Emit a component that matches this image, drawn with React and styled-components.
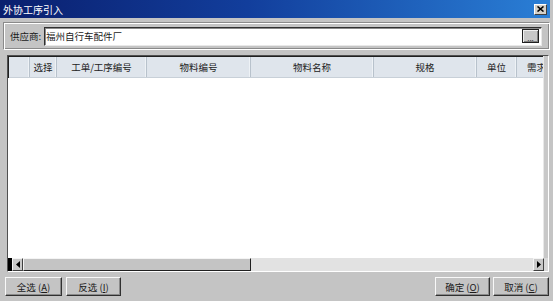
import styled, { createGlobalStyle } from "styled-components";

const GlobalStyle = createGlobalStyle`
  html, body {
    margin: 0;
    padding: 0;
    background: #c4c4c4;
  }
  body {
    font-family: "Noto Sans CJK SC", "Liberation Sans", sans-serif;
    font-size: 9.5px;
    color: #1a1a1a;
  }
`;

const Window = styled.div`
  width: 553px;
  height: 301px;
  box-sizing: border-box;
  background: #c4c4c4;
  display: flex;
  flex-direction: column;
  overflow: hidden;
`;

const TitleBar = styled.div`
  height: 18px;
  margin-right: 3px;
  display: flex;
  align-items: center;
  justify-content: space-between;
  padding: 0 3px 0 3px;
  background: linear-gradient(to right, #0a1f6e 0%, #123e9c 45%, #2a7fd6 100%);
  color: #fff;
  font-size: 10px;
  box-sizing: border-box;
`;

const CloseButton = styled.div`
  width: 13px;
  height: 11px;
  box-sizing: border-box;
  background: #d4d0c8;
  border: 1px solid;
  border-color: #fff #404040 #404040 #fff;
  display: flex;
  align-items: center;
  justify-content: center;
`;

const SupplierPanel = styled.div`
  margin: 4px 3px 0 3px;
  height: 28px;
  box-sizing: border-box;
  border: 1px solid;
  border-color: #8a8a8a #fff #fff #8a8a8a;
  box-shadow: inset 1px 1px 0 #fff, inset -1px -1px 0 #8a8a8a;
  display: flex;
  align-items: center;
  padding: 0 7px 0 6px;
  gap: 0;
`;

const Label = styled.span`
  width: 34px;
  flex: none;
  white-space: nowrap;
`;

const InputBox = styled.div`
  flex: 1;
  height: 19px;
  box-sizing: border-box;
  background: #fff;
  border: 1px solid;
  border-color: #303030 #e8e8e8 #e8e8e8 #303030;
  box-shadow: inset 1px 1px 0 #8a8a8a;
  display: flex;
  align-items: center;
  justify-content: space-between;
  padding: 0 2px 0 1px;
`;

const BrowseButton = styled.div`
  width: 17px;
  height: 14px;
  box-sizing: border-box;
  background: #c8c8c8;
  border: 1px solid #202020;
  box-shadow: inset 1px 1px 0 #f0f0f0, inset -1px -1px 0 #808080;
  display: flex;
  align-items: flex-end;
  justify-content: center;
  font-size: 8px;
  line-height: 9px;
  color: #333;
`;

const Grid = styled.div`
  margin: 5px 4px 0 7px;
  height: 217px;
  box-sizing: border-box;
  border: 1px solid;
  border-color: #505050 #fff #fff #505050;
  box-shadow: inset 1px 1px 0 #202020;
  display: flex;
  flex-direction: column;
  background: #fff;
  overflow: hidden;
`;

const GridMain = styled.div`
  flex: 1;
  display: flex;
  min-height: 0;
`;

const TableArea = styled.div`
  flex: 1;
  display: flex;
  flex-direction: column;
  overflow: hidden;
`;

const HeaderRow = styled.div`
  height: 20px;
  flex: none;
  display: flex;
  background: #dfe5ec;
  border-bottom: 1px solid #c8d0d8;
  margin-top: 1px;
  margin-left: 1px;
`;

const HeaderCell = styled.div`
  width: ${(p) => p.$w}px;
  flex: none;
  box-sizing: border-box;
  border-right: 1px solid #b8c2cc;
  box-shadow: inset -1px 0 0 #eef2f6;
  display: flex;
  align-items: center;
  justify-content: center;
  white-space: nowrap;
  overflow: hidden;
  color: #222;
`;

const Body = styled.div`
  flex: 1;
  background: #fff;
`;

const VScroll = styled.div`
  width: 4px;
  flex: none;
  background: #c8c8c8;
  border-left: 1px solid #e8e8e8;
`;

const HScroll = styled.div`
  height: 13px;
  flex: none;
  display: flex;
  background: #e2e2e2;
`;

const ScrollEdge = styled.div`
  width: 4px;
  background: #000;
`;

const ArrowButton = styled.div`
  width: 11px;
  flex: none;
  box-sizing: border-box;
  background: #c8c8c8;
  border: 1px solid;
  border-color: #f4f4f4 #404040 #404040 #f4f4f4;
  display: flex;
  align-items: center;
  justify-content: center;
`;

const Thumb = styled.div`
  width: 228px;
  flex: none;
  box-sizing: border-box;
  background: #c4c4c4;
  border: 1px solid;
  border-color: #f4f4f4 #202020 #202020 #f4f4f4;
`;

const Track = styled.div`
  flex: 1;
  background: #e2e2e2;
`;

const Corner = styled.div`
  width: 4px;
  background: #d8d8d8;
`;

const Footer = styled.div`
  margin: 5px 4px 0 5px;
  display: flex;
  justify-content: space-between;
`;

const ButtonGroup = styled.div`
  display: flex;
  gap: ${(p) => p.$gap}px;
`;

const Button = styled.div`
  width: ${(p) => p.$w}px;
  height: 19px;
  box-sizing: border-box;
  background: #c4c4c4;
  border: 1px solid;
  border-color: #f8f8f8 #303030 #303030 #f8f8f8;
  box-shadow: inset -1px -1px 0 #8a8a8a;
  display: flex;
  align-items: center;
  justify-content: center;
  white-space: nowrap;
  color: #1a1a1a;

  u {
    text-decoration: underline;
  }
`;

const columns = [
  { w: 21, t: "" },
  { w: 27, t: "选择" },
  { w: 90, t: "工单/工序编号" },
  { w: 104, t: "物料编号" },
  { w: 123, t: "物料名称" },
  { w: 103, t: "规格" },
  { w: 40, t: "单位" },
  { w: 40, t: "需求" },
];

const Arrow = ({ dir }) => (
  <svg width="4" height="7" viewBox="0 0 4 7">
    {dir === "left" ? (
      <path d="M4 0 L0 3.5 L4 7 Z" fill="#000" />
    ) : (
      <path d="M0 0 L4 3.5 L0 7 Z" fill="#000" />
    )}
  </svg>
);

const App = () => {
  return (
    <>
      <GlobalStyle />
      <Window>
        <TitleBar>
          <span>外协工序引入</span>
          <CloseButton>
            <svg width="7" height="6" viewBox="0 0 7 6">
              <path d="M0.5 0.5 L6.5 5.5 M6.5 0.5 L0.5 5.5" stroke="#000" strokeWidth="1.6" />
            </svg>
          </CloseButton>
        </TitleBar>

        <SupplierPanel>
          <Label>供应商:</Label>
          <InputBox>
            <span>福州自行车配件厂</span>
            <BrowseButton>...</BrowseButton>
          </InputBox>
        </SupplierPanel>

        <Grid>
          <GridMain>
            <TableArea>
              <HeaderRow>
                {columns.map((c, i) => (
                  <HeaderCell key={i} $w={c.w}>
                    {c.t}
                  </HeaderCell>
                ))}
              </HeaderRow>
              <Body />
            </TableArea>
            <VScroll />
          </GridMain>
          <HScroll>
            <ScrollEdge />
            <ArrowButton>
              <Arrow dir="left" />
            </ArrowButton>
            <Thumb />
            <Track />
            <ArrowButton>
              <Arrow dir="right" />
            </ArrowButton>
            <Corner />
          </HScroll>
        </Grid>

        <Footer>
          <ButtonGroup $gap={4}>
            <Button $w={57}>
              全选 (<u>A</u>)
            </Button>
            <Button $w={55}>
              反选 (<u>I</u>)
            </Button>
          </ButtonGroup>
          <ButtonGroup $gap={3}>
            <Button $w={55}>
              确定 (<u>O</u>)
            </Button>
            <Button $w={56}>
              取消 (<u>C</u>)
            </Button>
          </ButtonGroup>
        </Footer>
      </Window>
    </>
  );
};

export default App;
